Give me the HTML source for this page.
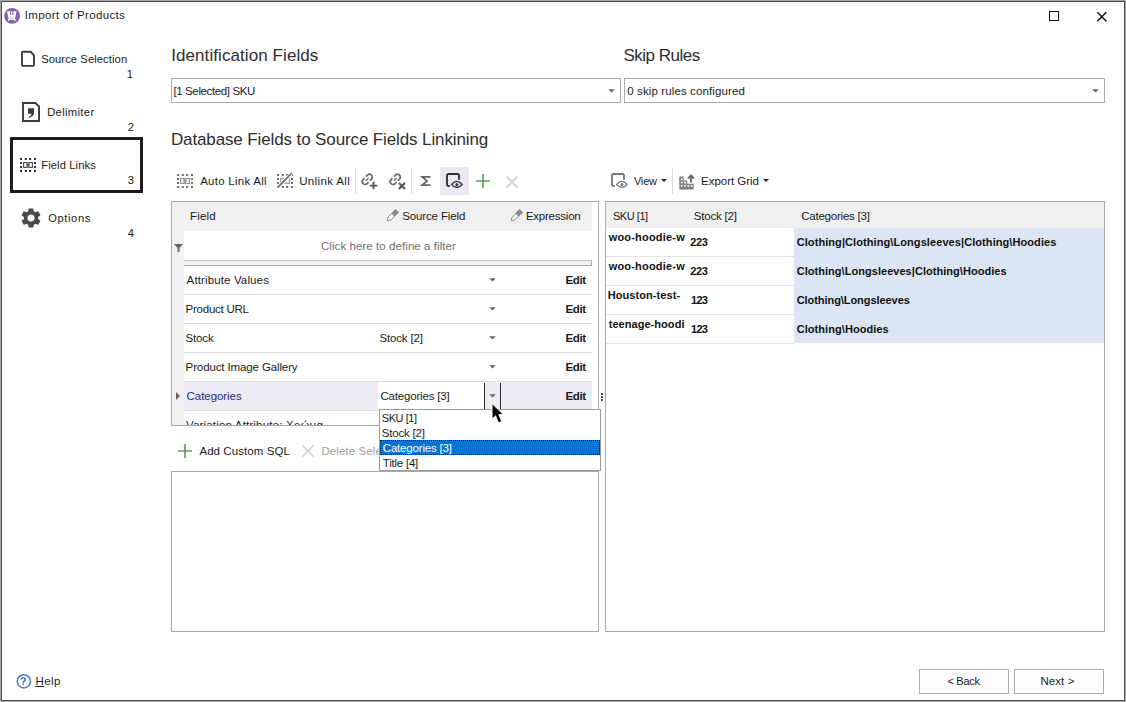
<!DOCTYPE html>
<html><head><meta charset="utf-8"><title>Import of Products</title>
<style>
html,body{margin:0;padding:0;}
body{width:1126px;height:702px;position:relative;overflow:hidden;background:#fff;font-family:"Liberation Sans","DejaVu Sans",sans-serif;font-size:12px;color:#1a1a1a;}
.t,.b{position:absolute;}
.t{white-space:nowrap;line-height:16px;height:16px;}
.b{box-sizing:border-box;}
svg{position:absolute;overflow:visible;}
</style></head><body>
<div class="b" style="left:0;top:0;width:1126px;height:702px;border:1px solid #a6a6a6;"></div>
<div class="b" style="left:1px;top:1px;width:1124px;height:700px;border:1px solid #4f4f4f;"></div>
<svg style="left:0px;top:0px" width="30" height="30" viewBox="0 0 30 30"><circle cx="12.100" cy="15.900" r="7.900" fill="#8262ab"/><path d="M7 11.300 H16.500 L15.300 17.700 H8.300 Z" fill="#fff"/><path d="M10.700 11.200 V15 M12.900 11.200 V15" stroke="#8262ab" stroke-width="1.100"/><path d="M9.800 17.500 L8.600 20.200 M13.800 17.500 L15 20.200 M9.600 19.100 H14" stroke="#fff" stroke-width="1.500" stroke-linecap="round"/></svg>
<span class="t" style="left:24.8px;top:7px;font-size:11.5px;letter-spacing:0.36px;">Import of Products</span>
<div class="b" style="left:1049px;top:11px;width:10px;height:10px;border:1.4px solid #111;"></div>
<svg style="left:1097.200px;top:11.500px" width="9.600" height="9.600" viewBox="0 0 10 10"><path d="M0.3 0.3 L9.7 9.7 M9.7 0.3 L0.3 9.7" stroke="#111" stroke-width="1.5" fill="none"/></svg>
<div class="b" style="left:10px;top:137px;width:133px;height:56px;border:3px solid #1c1c1c;"></div>
<svg style="left:0px;top:0px" width="60" height="130" viewBox="0 0 60 130"><path d="M23 51.750 H30.700 L33.950 55.300 V64.900 Q33.950 65.900 32.950 65.900 H23 Q22 65.900 22 64.900 V52.750 Q22 51.750 23 51.750 Z" fill="none" stroke="#3a3a3a" stroke-width="1.900" stroke-linejoin="round"/><path d="M23 103 H35.400 L39.050 106.500 V121.050 H23 Z" fill="none" stroke="#3a3a3a" stroke-width="1.900" stroke-linejoin="miter"/><path d="M28 108.200 H34.100 V112.600 Q34.100 116.600 28.800 118 L28.400 117.200 Q31.400 116 31.600 113.800 H28 Z" fill="#3a3a3a"/></svg>
<span class="t" style="left:41.2px;top:51px;font-size:11.2px;letter-spacing:0.09px;">Source Selection</span><span class="t" style="left:126.7px;top:66px;font-size:11.2px;">1</span>
<span class="t" style="left:47.2px;top:104px;font-size:11.2px;letter-spacing:0.35px;">Delimiter</span><span class="t" style="left:127.7px;top:119px;font-size:11.2px;">2</span>
<svg style="left:20px;top:158px" width="16" height="14" viewBox="0 0 16 14"><rect x="0" y="0" width="2" height="2" fill="#2e2e2e"/><rect x="0" y="4" width="2" height="2" fill="#2e2e2e"/><rect x="0" y="8" width="2" height="2" fill="#2e2e2e"/><rect x="0" y="12" width="2" height="2" fill="#2e2e2e"/><rect x="4.8" y="0" width="2" height="2" fill="#2e2e2e"/><rect x="4.8" y="12" width="2" height="2" fill="#2e2e2e"/><rect x="9.1" y="0" width="2" height="2" fill="#2e2e2e"/><rect x="9.1" y="12" width="2" height="2" fill="#2e2e2e"/><rect x="14" y="0" width="2" height="2" fill="#2e2e2e"/><rect x="14" y="4" width="2" height="2" fill="#2e2e2e"/><rect x="14" y="8" width="2" height="2" fill="#2e2e2e"/><rect x="14" y="12" width="2" height="2" fill="#2e2e2e"/><rect x="3.6" y="4.6" width="3.6" height="4.8" fill="none" stroke="#4a4a4a" stroke-width="1.1"/><rect x="8.8" y="4.6" width="3.6" height="4.8" fill="none" stroke="#4a4a4a" stroke-width="1.1"/><path d="M6.2 7 H9.8" stroke="#4a4a4a" stroke-width="1.2"/></svg>
<span class="t" style="left:41.2px;top:157px;font-size:11.2px;letter-spacing:0.11px;">Field Links</span><span class="t" style="left:127.7px;top:172px;font-size:11.2px;">3</span>
<svg style="left:21px;top:208px" width="20" height="20" viewBox="2 2 20 20"><path fill="#4a4a4d" d="M19.14 12.94c.04-.3.06-.61.06-.94 0-.32-.02-.64-.07-.94l2.03-1.58a.49.49 0 0 0 .12-.61l-1.92-3.32a.488.488 0 0 0-.59-.22l-2.39.96c-.5-.38-1.03-.7-1.62-.94l-.36-2.54a.484.484 0 0 0-.48-.41h-3.84c-.24 0-.43.17-.47.41l-.36 2.54c-.59.24-1.13.57-1.62.94l-2.39-.96c-.22-.08-.47 0-.59.22L2.74 8.87c-.12.21-.08.47.12.61l2.03 1.58c-.05.3-.09.63-.09.94s.02.64.07.94l-2.03 1.58a.49.49 0 0 0-.12.61l1.92 3.32c.12.22.37.29.59.22l2.39-.96c.5.38 1.03.7 1.62.94l.36 2.54c.05.24.24.41.48.41h3.84c.24 0 .44-.17.47-.41l.36-2.54c.59-.24 1.13-.56 1.62-.94l2.39.96c.22.08.47 0 .59-.22l1.92-3.32c.12-.22.07-.47-.12-.61l-2.01-1.58zM12 15.6c-1.98 0-3.6-1.620-3.6-3.6s1.62-3.6 3.6-3.600 3.6 1.620 3.600 3.600-1.620 3.600-3.600 3.600z"/></svg>
<span class="t" style="left:48.2px;top:210px;font-size:11.2px;letter-spacing:0.6px;">Options</span><span class="t" style="left:127.7px;top:225px;font-size:11.2px;">4</span><span class="t" style="left:171.2px;top:48px;font-size:17px;letter-spacing:0.08px;color:#2e2e2e;">Identification Fields</span><span class="t" style="left:623.4px;top:48px;font-size:17px;letter-spacing:-0.48px;color:#2e2e2e;">Skip Rules</span>
<div class="b" style="left:171px;top:78px;width:450px;height:25px;border:1px solid #ababab;"></div>
<div class="b" style="left:624px;top:78px;width:481px;height:25px;border:1px solid #ababab;"></div>
<span class="t" style="left:173.4px;top:83px;font-size:11.5px;letter-spacing:-0.37px;">[1 Selected] SKU</span><span class="t" style="left:627.2px;top:83px;font-size:11.5px;letter-spacing:0.12px;">0 skip rules configured</span><svg style="left:607.5px;top:89.2px" width="7" height="4" viewBox="0 0 7 4"><path d="M0.200 0.200 H6.800 L3.500 3.400 Z" fill="#646464"/></svg><svg style="left:1091.5px;top:89.2px" width="7" height="4" viewBox="0 0 7 4"><path d="M0.200 0.200 H6.800 L3.500 3.400 Z" fill="#646464"/></svg><span class="t" style="left:170.9px;top:132px;font-size:17px;letter-spacing:-0.12px;color:#2e2e2e;">Database Fields to Source Fields Linkining</span><svg style="left:177px;top:174px" width="16" height="14" viewBox="0 0 16 14"><rect x="0" y="0" width="2" height="2" fill="#6e6e6e"/><rect x="0" y="4" width="2" height="2" fill="#6e6e6e"/><rect x="0" y="8" width="2" height="2" fill="#6e6e6e"/><rect x="0" y="12" width="2" height="2" fill="#6e6e6e"/><rect x="4.8" y="0" width="2" height="2" fill="#6e6e6e"/><rect x="4.8" y="12" width="2" height="2" fill="#6e6e6e"/><rect x="9.1" y="0" width="2" height="2" fill="#6e6e6e"/><rect x="9.1" y="12" width="2" height="2" fill="#6e6e6e"/><rect x="14" y="0" width="2" height="2" fill="#6e6e6e"/><rect x="14" y="4" width="2" height="2" fill="#6e6e6e"/><rect x="14" y="8" width="2" height="2" fill="#6e6e6e"/><rect x="14" y="12" width="2" height="2" fill="#6e6e6e"/><rect x="3.6" y="4.6" width="3.6" height="4.8" fill="none" stroke="#8a8a8a" stroke-width="1.1"/><rect x="8.8" y="4.6" width="3.6" height="4.8" fill="none" stroke="#8a8a8a" stroke-width="1.1"/><path d="M6.2 7 H9.8" stroke="#8a8a8a" stroke-width="1.2"/></svg>
<span class="t" style="left:200.2px;top:173px;font-size:11.5px;letter-spacing:0.26px;">Auto Link All</span><svg style="left:277px;top:174px" width="16" height="14" viewBox="0 0 16 14"><rect x="0" y="0" width="2" height="2" fill="#6e6e6e"/><rect x="0" y="4" width="2" height="2" fill="#6e6e6e"/><rect x="0" y="8" width="2" height="2" fill="#6e6e6e"/><rect x="0" y="12" width="2" height="2" fill="#6e6e6e"/><rect x="4.8" y="0" width="2" height="2" fill="#6e6e6e"/><rect x="4.8" y="12" width="2" height="2" fill="#6e6e6e"/><rect x="9.1" y="0" width="2" height="2" fill="#6e6e6e"/><rect x="9.1" y="12" width="2" height="2" fill="#6e6e6e"/><rect x="14" y="0" width="2" height="2" fill="#6e6e6e"/><rect x="14" y="4" width="2" height="2" fill="#6e6e6e"/><rect x="14" y="8" width="2" height="2" fill="#6e6e6e"/><rect x="14" y="12" width="2" height="2" fill="#6e6e6e"/><rect x="3.6" y="4.6" width="3.6" height="4.8" fill="none" stroke="#9a9a9a" stroke-width="1.1"/><rect x="8.8" y="4.6" width="3.6" height="4.8" fill="none" stroke="#9a9a9a" stroke-width="1.1"/><path d="M6.2 7 H9.8" stroke="#9a9a9a" stroke-width="1.2"/><path d="M0.6 13.6 L14.6 -0.8" stroke="#fff" stroke-width="3.4"/><path d="M0.6 13.6 L14.6 -0.8" stroke="#757575" stroke-width="1.9"/></svg>
<span class="t" style="left:299.2px;top:173px;font-size:11.5px;letter-spacing:0.36px;">Unlink All</span>
<div class="b" style="left:355px;top:168px;width:1px;height:26px;background:#dcdcdc;"></div>
<div class="b" style="left:411px;top:168px;width:1px;height:26px;background:#dcdcdc;"></div>
<svg style="left:360.5px;top:172.5px" width="17" height="17" viewBox="0 0 17 17"><g transform="translate(6.250 6.400) rotate(-45)" fill="none" stroke="#6a6a6a" stroke-width="1.700"><path d="M-1 -2.850 H-3.100 A2.850 2.850 0 0 0 -3.100 2.850 H-1"/><path d="M1 -2.850 H3.100 A2.850 2.850 0 0 1 3.100 2.850 H1"/><path d="M-1.900 0 H1.900" stroke-width="1.500"/></g><path d="M12.500 8.800 V16.300 M8.700 12.600 H16.300" stroke="#555" stroke-width="1.900" fill="none"/></svg>
<svg style="left:388.5px;top:172.5px" width="17" height="17" viewBox="0 0 17 17"><g transform="translate(6.250 6.400) rotate(-45)" fill="none" stroke="#6a6a6a" stroke-width="1.700"><path d="M-1 -2.850 H-3.100 A2.850 2.850 0 0 0 -3.100 2.850 H-1"/><path d="M1 -2.850 H3.100 A2.850 2.850 0 0 1 3.100 2.850 H1"/><path d="M-1.900 0 H1.900" stroke-width="1.500"/></g><path d="M9.900 9.900 L16 16 M16 9.900 L9.900 16" stroke="#555" stroke-width="2.100" fill="none"/></svg>

<svg style="left:421px;top:176px" width="10" height="10" viewBox="0 0 10 10"><path d="M9.600 0.900 H1.200 L6 5 L1.200 9.100 H9.600" fill="none" stroke="#666" stroke-width="1.800" stroke-linejoin="miter"/></svg>
<div class="b" style="left:440px;top:167px;width:29px;height:28px;background:#e9e9f1;"></div>
<svg style="left:446px;top:173px" width="17" height="16" viewBox="0 0 17 16"><path d="M13 6.800 V2.400 Q13 1 11.600 1 H2.400 Q1 1 1 2.400 V11.600 Q1 13 2.400 13 H3.800" fill="none" stroke="#33333d" stroke-width="1.900"/><path d="M5.600 11.500 Q10.800 5.300 16.200 11.500 Q10.800 17.500 5.600 11.500 Z" fill="#e9e9f1" stroke="#33333d" stroke-width="1.300"/><circle cx="10.900" cy="11.500" r="1.500" fill="#33333d"/></svg>

<svg style="left:476px;top:174px" width="14" height="14" viewBox="0 0 14 14"><path d="M7 0 V14 M0 7 H14" stroke="#5aa35a" stroke-width="1.700" fill="none"/></svg>
<svg style="left:505.500px;top:175.700px" width="12" height="12" viewBox="0 0 12 12"><path d="M0.500 0.500 L11.500 11.500 M11.500 0.500 L0.500 11.500" stroke="#cdcdcd" stroke-width="1.600" fill="none"/></svg>
<svg style="left:610.7px;top:172.7px" width="17" height="16" viewBox="0 0 17 16"><path d="M13 6.800 V2.400 Q13 1 11.600 1 H2.400 Q1 1 1 2.400 V11.600 Q1 13 2.400 13 H3.800" fill="none" stroke="#7a7a7a" stroke-width="1.900"/><path d="M5.600 11.500 Q10.800 5.300 16.200 11.500 Q10.800 17.500 5.600 11.500 Z" fill="#fff" stroke="#7a7a7a" stroke-width="1.300"/><circle cx="10.900" cy="11.500" r="1.500" fill="#7a7a7a"/></svg>
<span class="t" style="left:633.9px;top:173px;font-size:11.0px;letter-spacing:-0.17px;">View</span>
<svg style="left:660.500px;top:179.300px" width="6" height="3" viewBox="0 0 6 3"><path d="M0 0 H6 L3 3 Z" fill="#222"/></svg>
<div class="b" style="left:672px;top:168px;width:1px;height:26px;background:#dcdcdc;"></div>
<svg style="left:679px;top:173.500px" width="16" height="16" viewBox="0 0 16 16"><path d="M0.300 3.200 Q0.300 2.400 1.100 2.400 H4.600 V6.400 H8.200 V9.800 H14.700 V14.600 Q14.700 15.600 13.700 15.600 H1.300 Q0.300 15.600 0.300 14.600 Z" fill="#7d7d7d"/><g fill="#fff"><rect x="1.900" y="4.400" width="1.700" height="1.700"/><rect x="1.900" y="7.600" width="1.700" height="1.800"/><rect x="1.900" y="10.900" width="1.700" height="1.800"/><rect x="5.200" y="7.600" width="1.700" height="1.800"/><rect x="5.200" y="10.900" width="1.700" height="1.800"/><rect x="8.500" y="10.900" width="1.700" height="1.800"/><rect x="11.800" y="10.900" width="1.700" height="1.800"/></g><path d="M12 8.600 V2.400 M8.900 4.600 L12 1.400 L15.100 4.600" fill="none" stroke="#6a6a6a" stroke-width="1.900" stroke-linejoin="miter"/></svg>
<span class="t" style="left:701.0px;top:173px;font-size:11.5px;letter-spacing:-0.02px;">Export Grid</span>
<svg style="left:762.500px;top:179.300px" width="6" height="3" viewBox="0 0 6 3"><path d="M0 0 H6 L3 3 Z" fill="#222"/></svg>
<div class="b" style="left:171px;top:201px;width:428px;height:225px;border:1px solid #a9a9a9;background:#fff;"></div>
<div class="b" style="left:172px;top:202px;width:420px;height:29px;background:#f0f0f0;"></div>
<div class="b" style="left:172px;top:231px;width:12px;height:194px;background:#f0f0f0;"></div>
<div class="b" style="left:184px;top:382px;width:408px;height:28px;background:#ececf4;"></div>
<div class="b" style="left:378px;top:382px;width:106px;height:28px;background:#fff;"></div>
<div class="b" style="left:184px;top:260px;width:408px;height:6px;border:1px solid #a8a8a8;border-left:none;border-top-color:#c4c4c4;background:#f1f1f1;"></div>
<div class="b" style="left:184px;top:294px;width:408px;height:1px;background:#dedede;"></div>
<div class="b" style="left:184px;top:323px;width:408px;height:1px;background:#dedede;"></div>
<div class="b" style="left:184px;top:352px;width:408px;height:1px;background:#dedede;"></div>
<div class="b" style="left:184px;top:381px;width:408px;height:1px;background:#dedede;"></div>
<div class="b" style="left:184px;top:410px;width:408px;height:1px;background:#dedede;"></div>
<span class="t" style="left:189.9px;top:208px;font-size:11.5px;letter-spacing:0.23px;">Field</span><svg style="left:396.6px;top:210.8px" width="1" height="1" viewBox="0 0 1 1"><g transform="rotate(45)"><path d="M-2 0 H2 V10.600 L0 13.800 L-2 10.600 Z" fill="#fafafa" stroke="#858585" stroke-width="0.900" stroke-linejoin="round"/><rect x="-2.200" y="-0.300" width="4.400" height="6" fill="#8a8a8a"/></g></svg>
<span class="t" style="left:402.2px;top:208px;font-size:11.5px;letter-spacing:-0.13px;">Source Field</span><svg style="left:520.6px;top:210.8px" width="1" height="1" viewBox="0 0 1 1"><g transform="rotate(45)"><path d="M-2 0 H2 V10.600 L0 13.800 L-2 10.600 Z" fill="#fafafa" stroke="#858585" stroke-width="0.900" stroke-linejoin="round"/><rect x="-2.200" y="-0.300" width="4.400" height="6" fill="#8a8a8a"/></g></svg>
<span class="t" style="left:525.9px;top:208px;font-size:11.5px;letter-spacing:-0.23px;">Expression</span><svg style="left:174px;top:244px" width="9" height="8" viewBox="0 0 9 8"><path d="M0 0 H9 L5.500 3.800 V8 H3.500 V3.800 Z" fill="#666"/></svg>
<span class="t" style="left:321.0px;top:238px;font-size:11.5px;letter-spacing:0.07px;color:#707070;">Click here to define a filter</span><span class="t" style="left:186.6px;top:272px;font-size:11.5px;letter-spacing:0.13px;">Attribute Values</span><svg style="left:488.8px;top:278.4px" width="7" height="4" viewBox="0 0 7 4"><path d="M0.200 0.200 H6.800 L3.500 3.400 Z" fill="#646464"/></svg><span class="t" style="left:565.4px;top:272px;font-size:11.5px;letter-spacing:-0.33px;font-weight:bold;">Edit</span><span class="t" style="left:185.6px;top:301px;font-size:11.5px;letter-spacing:-0.25px;">Product URL</span><svg style="left:488.8px;top:307.4px" width="7" height="4" viewBox="0 0 7 4"><path d="M0.200 0.200 H6.800 L3.500 3.400 Z" fill="#646464"/></svg><span class="t" style="left:565.4px;top:301px;font-size:11.5px;letter-spacing:-0.33px;font-weight:bold;">Edit</span><span class="t" style="left:185.6px;top:330px;font-size:11.5px;letter-spacing:-0.17px;">Stock</span><span class="t" style="left:379.4px;top:330px;font-size:11.5px;letter-spacing:-0.15px;">Stock [2]</span><svg style="left:488.8px;top:336.4px" width="7" height="4" viewBox="0 0 7 4"><path d="M0.200 0.200 H6.800 L3.500 3.400 Z" fill="#646464"/></svg><span class="t" style="left:565.4px;top:330px;font-size:11.5px;letter-spacing:-0.33px;font-weight:bold;">Edit</span><span class="t" style="left:185.6px;top:359px;font-size:11.5px;letter-spacing:-0.12px;">Product Image Gallery</span><svg style="left:488.8px;top:365.4px" width="7" height="4" viewBox="0 0 7 4"><path d="M0.200 0.200 H6.800 L3.500 3.400 Z" fill="#646464"/></svg><span class="t" style="left:565.4px;top:359px;font-size:11.5px;letter-spacing:-0.33px;font-weight:bold;">Edit</span><span class="t" style="left:186.6px;top:388px;font-size:11.5px;letter-spacing:-0.06px;color:#2b2b7b;">Categories</span><span class="t" style="left:380.4px;top:388px;font-size:11.5px;letter-spacing:-0.18px;">Categories [3]</span><svg style="left:488.8px;top:394.4px" width="7" height="4" viewBox="0 0 7 4"><path d="M0.200 0.200 H6.800 L3.500 3.400 Z" fill="#646464"/></svg><span class="t" style="left:565.4px;top:388px;font-size:11.5px;letter-spacing:-0.33px;font-weight:bold;">Edit</span><div class="b" style="left:184px;top:411px;width:200px;height:14px;overflow:hidden;"><span class="t" style="left:2.0px;top:6px;font-size:11.5px;letter-spacing:0.17px;">Variation Attribute: Χρώμα</span></div><svg style="left:176px;top:392px" width="4" height="8" viewBox="0 0 4 8"><path d="M0 0 L4 4 L0 8 Z" fill="#666"/></svg>
<div class="b" style="left:484px;top:383px;width:1px;height:26px;background:#2c2c32;"></div><div class="b" style="left:500px;top:383px;width:1px;height:26px;background:#2c2c32;"></div>
<div class="b" style="left:601px;top:393px;width:2px;height:2px;background:#555;"></div><div class="b" style="left:601px;top:396px;width:2px;height:2px;background:#555;"></div><div class="b" style="left:601px;top:399px;width:2px;height:2px;background:#555;"></div>
<div class="b" style="left:605px;top:201px;width:500px;height:431px;border:1px solid #a9a9a9;background:#fff;"></div>
<div class="b" style="left:606px;top:202px;width:498px;height:26px;background:#f0f0f0;"></div>
<div class="b" style="left:794px;top:228px;width:310px;height:115px;background:#dbe5f3;"></div>
<div class="b" style="left:606px;top:256px;width:188px;height:1px;background:#e2e2e2;"></div>
<div class="b" style="left:606px;top:285px;width:188px;height:1px;background:#e2e2e2;"></div>
<div class="b" style="left:606px;top:314px;width:188px;height:1px;background:#e2e2e2;"></div>
<div class="b" style="left:606px;top:343px;width:188px;height:1px;background:#e2e2e2;"></div>
<span class="t" style="left:613.0px;top:208px;font-size:11.0px;letter-spacing:-0.47px;">SKU [1]</span><span class="t" style="left:693.8px;top:208px;font-size:11.5px;letter-spacing:-0.2px;">Stock [2]</span><span class="t" style="left:801.2px;top:208px;font-size:11.5px;letter-spacing:-0.22px;">Categories [3]</span><span class="t" style="left:608.7px;top:229px;font-size:11px;letter-spacing:0.19px;font-weight:bold;color:#111;">woo-hoodie-w</span><span class="t" style="left:690.3px;top:234px;font-size:11px;letter-spacing:-0.4px;font-weight:bold;color:#111;">223</span><span class="t" style="left:796.7px;top:234px;font-size:11px;letter-spacing:0.08px;font-weight:bold;color:#111;">Clothing|Clothing\Longsleeves|Clothing\Hoodies</span><span class="t" style="left:608.7px;top:258px;font-size:11px;letter-spacing:0.19px;font-weight:bold;color:#111;">woo-hoodie-w</span><span class="t" style="left:690.3px;top:263px;font-size:11px;letter-spacing:-0.4px;font-weight:bold;color:#111;">223</span><span class="t" style="left:796.7px;top:263px;font-size:11px;letter-spacing:0.04px;font-weight:bold;color:#111;">Clothing\Longsleeves|Clothing\Hoodies</span><span class="t" style="left:607.7px;top:287px;font-size:11px;letter-spacing:0.08px;font-weight:bold;color:#111;">Houston-test-</span><span class="t" style="left:691.1px;top:292px;font-size:11px;letter-spacing:-0.8px;font-weight:bold;color:#111;">123</span><span class="t" style="left:796.7px;top:292px;font-size:11px;letter-spacing:-0.06px;font-weight:bold;color:#111;">Clothing\Longsleeves</span><span class="t" style="left:608.7px;top:316px;font-size:11px;letter-spacing:0.05px;font-weight:bold;color:#111;">teenage-hoodi</span><span class="t" style="left:691.1px;top:321px;font-size:11px;letter-spacing:-0.8px;font-weight:bold;color:#111;">123</span><span class="t" style="left:796.7px;top:321px;font-size:11px;letter-spacing:0.06px;font-weight:bold;color:#111;">Clothing\Hoodies</span><svg style="left:178px;top:444px" width="14" height="14" viewBox="0 0 14 14"><path d="M7 0 V14 M0 7 H14" stroke="#5aa35a" stroke-width="1.700" fill="none"/></svg>
<span class="t" style="left:199.4px;top:443px;font-size:11.5px;letter-spacing:0.08px;">Add Custom SQL</span>
<svg style="left:302px;top:445px" width="12" height="12" viewBox="0 0 12 12"><path d="M0.500 0.500 L11.500 11.500 M11.500 0.500 L0.500 11.500" stroke="#cfcfcf" stroke-width="1.600" fill="none"/></svg>
<span class="t" style="left:321.4px;top:443px;font-size:11.5px;letter-spacing:0.1px;color:#a0a0a0;">Delete Selected</span>
<div class="b" style="left:171px;top:471px;width:428px;height:161px;border:1px solid #a9a9a9;background:#fff;"></div>
<svg style="left:16px;top:673px" width="16" height="16" viewBox="0 0 16 16"><circle cx="7.900" cy="8.300" r="6.600" fill="#fff" stroke="#4c7fbf" stroke-width="1.500"/></svg>
<span class="t" style="left:20.0px;top:673px;font-size:10.5px;font-weight:bold;color:#3b6db5;">?</span><span class="t" style="left:35.4px;top:673px;font-size:11.5px;letter-spacing:0.47px;"><span style="text-decoration:underline">H</span>elp</span>
<div class="b" style="left:919px;top:669px;width:90px;height:25px;border:1px solid #adadad;background:#fdfdfd;"></div>
<div class="b" style="left:1014px;top:669px;width:90px;height:25px;border:1px solid #adadad;background:#fdfdfd;"></div>
<span class="t" style="left:947.4px;top:673px;font-size:11.0px;letter-spacing:-0.26px;">&lt; Back</span><span class="t" style="left:1040.4px;top:673px;font-size:11.5px;letter-spacing:0.08px;">Next &gt;</span><div class="b" style="left:379px;top:409px;width:222px;height:62px;border:1px solid #9a9a9a;background:#fff;"></div>
<div class="b" style="left:380px;top:440px;width:220px;height:15px;background:#0a74d4;border:1px dotted #0b1d33;"></div>
<span class="t" style="left:381.8px;top:410px;font-size:11.0px;letter-spacing:-0.45px;">SKU [1]</span><span class="t" style="left:381.8px;top:425px;font-size:11.5px;letter-spacing:-0.21px;">Stock [2]</span><span class="t" style="left:382.8px;top:440px;font-size:11.5px;letter-spacing:-0.19px;color:#fff;">Categories [3]</span><span class="t" style="left:382.8px;top:455px;font-size:11.5px;letter-spacing:-0.22px;">Title [4]</span><svg style="left:480px;top:400px" width="30" height="30" viewBox="480 400 30 30"><path d="M492.100 403.700 L492.100 419 L495.600 415.700 L498.500 422.700 L501.700 421.400 L498.700 414.600 L503.300 414.600 Z" fill="#000" stroke="#fff" stroke-width="0.800" stroke-linejoin="round"/></svg>
</body></html>
